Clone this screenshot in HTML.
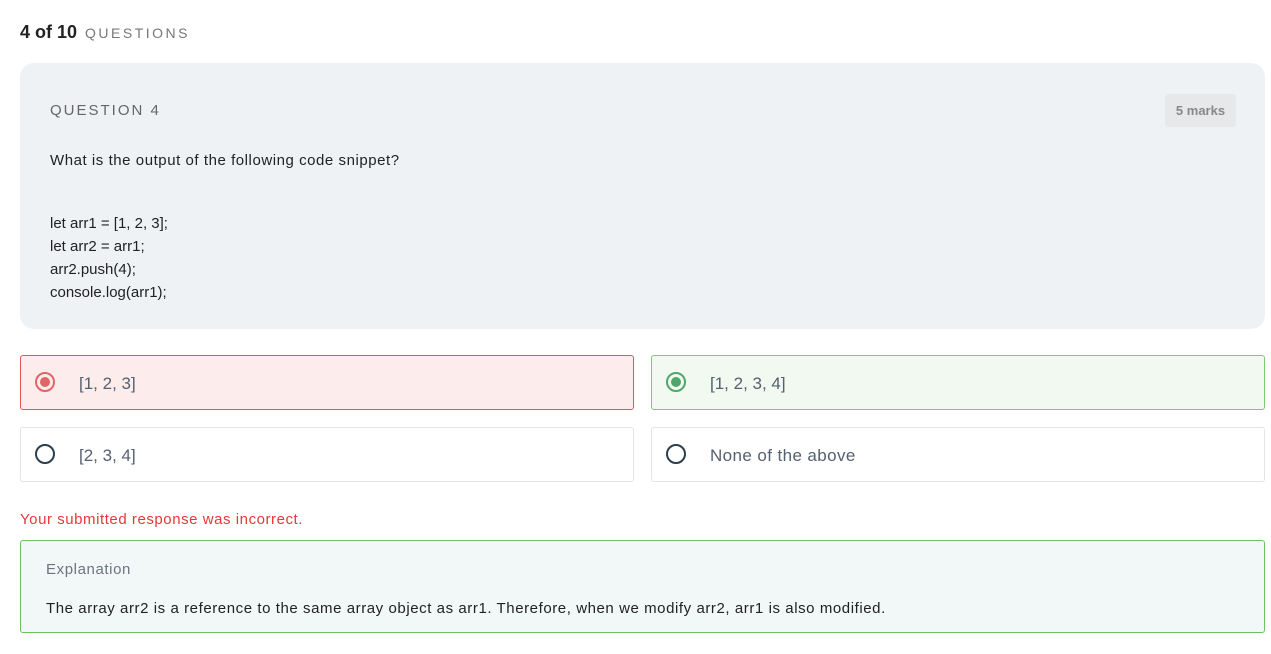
<!DOCTYPE html>
<html><head><style>
*{box-sizing:border-box;margin:0;padding:0}
body{width:1271px;height:654px;background:#fff;font-family:"Liberation Sans",sans-serif;position:relative;overflow:hidden}
.abs{position:absolute}
.hdr{left:20px;top:22px;font-size:18px;color:#222;font-weight:bold}
.hdr span{font-weight:normal;font-size:14px;letter-spacing:2.5px;color:#777;margin-left:8px}
.card{left:20px;top:63px;width:1245px;height:266px;background:#eff2f5;border-radius:14px}
.ql{left:30px;top:39px;font-size:15px;letter-spacing:2px;color:#666}
.marks{left:1145px;top:31px;width:71px;height:33px;background:#e6e8ea;border-radius:3px;font-size:13px;font-weight:bold;color:#888;text-align:center;line-height:33px}
.qt{left:30px;top:89px;font-size:15px;color:#222;letter-spacing:0.55px}
.code{left:30px;top:149px;font-size:15px;color:#222;line-height:23px}
.opt{height:55px;width:614px;border:1px solid #e5e5e5;border-radius:3px;font-size:17px;color:#556070}
.opt .r{position:absolute;left:14px;top:16px;width:20px;height:20px;border-radius:50%;border:2px solid #2f3e4c}
.opt .r i{position:absolute;left:3px;top:3px;width:10px;height:10px;border-radius:50%}
.opt .t{position:absolute;left:58px;top:18px}
.err{left:20px;top:511px;font-size:15px;color:#e53935;letter-spacing:0.55px}
.exp{left:20px;top:540px;width:1245px;height:93px;background:#f2f7f7;border:1px solid #6cc25f;border-radius:3px}
</style></head><body>
<div class="abs hdr">4 of 10<span>QUESTIONS</span></div>
<div class="abs card">
<div class="abs ql">QUESTION 4</div>
<div class="abs marks">5 marks</div>
<div class="abs qt">What is the output of the following code snippet?</div>
<div class="abs code">let arr1 = [1, 2, 3];<br>let arr2 = arr1;<br>arr2.push(4);<br>console.log(arr1);</div>
</div>
<div class="abs opt" style="left:20px;top:355px;background:#fdecec;border-color:#ea5455"><div class="r" style="border-color:#e06666"><i style="background:#e06666"></i></div><div class="t">[1, 2, 3]</div></div>
<div class="abs opt" style="left:651px;top:355px;background:#f1f9f0;border-color:#7ccb70"><div class="r" style="border-color:#4fa86a"><i style="background:#4fa86a"></i></div><div class="t">[1, 2, 3, 4]</div></div>
<div class="abs opt" style="left:20px;top:427px;height:55px"><div class="r"></div><div class="t">[2, 3, 4]</div></div>
<div class="abs opt" style="left:651px;top:427px;height:55px"><div class="r"></div><div class="t" style="letter-spacing:0.4px">None of the above</div></div>
<div class="abs err">Your submitted response was incorrect.</div>
<div class="abs exp">
<div class="abs" style="left:25px;top:20px;font-size:15px;color:#6b7580;letter-spacing:0.6px">Explanation</div>
<div class="abs" style="left:25px;top:59px;font-size:15px;color:#222;letter-spacing:0.57px">The array arr2 is a reference to the same array object as arr1. Therefore, when we modify arr2, arr1 is also modified.</div>
</div>
</body></html>
